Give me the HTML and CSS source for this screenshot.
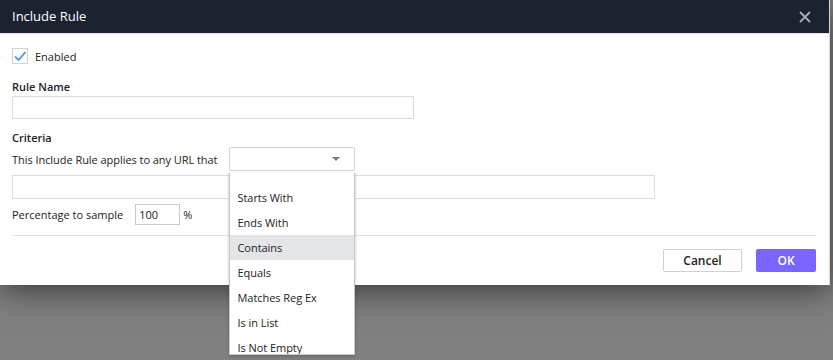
FILE: index.html
```html
<!DOCTYPE html>
<html lang="en">
    <head>
        <meta charset="utf-8" />
        <title>Include Rule</title>
        <link rel="stylesheet" href="styles.css">
    </head>
    <body>
        <div class="dialog">
            <div class="dialog-header">
                <span class="dialog-title">Include Rule</span>
                <svg class="close" width="12" height="12" viewBox="0 0 12 12">
                    <path d="M1 1 L11 11 M11 1 L1 11" stroke="#a9abb0" stroke-width="1.8" fill="none" />
                </svg>
            </div>
            <div class="dialog-body">
                <label class="check-row">
                    <span class="checkbox">
                        <svg width="14" height="14" viewBox="0 0 14 14">
                            <path d="M2 7.5 L5.5 11 L12.5 3" stroke="#3d8fe6" stroke-width="1.6" fill="none" />
                        </svg>
                    </span>
                    Enabled
                </label>

                <h4 class="label">Rule Name</h4>
                <input type="text" class="field name-field" />

                <h4 class="label criteria">Criteria</h4>
                <div class="applies-row">
                    <span>This Include Rule applies to any URL that</span>
                    <div class="select-wrap">
                        <div class="select">
                            <span class="caret"></span>
                        </div>
                        <ul class="options">
                            <li class="blank"></li>
                            <li>Starts With</li>
                            <li>Ends With</li>
                            <li class="hover">Contains</li>
                            <li>Equals</li>
                            <li>Matches Reg Ex</li>
                            <li>Is in List</li>
                            <li>Is Not Empty</li>
                        </ul>
                    </div>
                </div>
                <input type="text" class="field url-field" />

                <div class="sample-row">
                    <span>Percentage to sample</span>
                    <input type="text" class="pct" value="100" />
                    <span>%</span>
                </div>

                <div class="divider"></div>

                <div class="actions">
                    <button class="btn cancel">Cancel</button>
                    <button class="btn ok">OK</button>
                </div>
            </div>
        </div>
    </body>
</html>
```

FILE: styles.css
```css
body{
    margin: 0;
    background-color: #808080;
    font-family: "Open Sans", "Noto Sans", sans-serif;
    font-size: 11px;
    color: #222;
    height: 360px;
    overflow: hidden;
}

.dialog{
    width: 829px;
    background-color: #fff;
    box-shadow: 0 6px 30px rgba(0, 0, 0, 0.55);
    border-right: 1px solid #d8d8d8;
}

.dialog-header{
    height: 34px;
    background-color: #1c2230;
    border-bottom: 1px solid #e6e6ea;
    box-sizing: border-box;
    display: flex;
    align-items: center;
    justify-content: space-between;
    padding: 0 18px 1px 12px;
}

.dialog-title{
    color: #fff;
    font-size: 13px;
}

.close{
    margin-top: 1px;
}

.dialog-body{
    padding: 14px 12px 13px 12px;
}

.check-row{
    display: flex;
    align-items: center;
    gap: 7px;
    height: 16px;
}

.checkbox{
    width: 14px;
    height: 14px;
    border: 1px solid #cfd2d6;
    display: inline-flex;
}

.label{
    margin: 15px 0 1px 0;
    font-size: 11px;
    font-weight: 600;
    line-height: 16px;
}

.label.criteria{
    margin-top: 11px;
}

.field{
    display: block;
    box-sizing: border-box;
    height: 23px;
    border: 1px solid #dcdcdc;
    margin: 0;
    padding: 0 6px;
    font: inherit;
}

.name-field{
    width: 402px;
}

.url-field{
    width: 643px;
    height: 24px;
    margin-top: 4px;
}

.applies-row{
    display: flex;
    align-items: center;
    gap: 12px;
    height: 24px;
    letter-spacing: -0.05px;
}

.select-wrap{
    position: relative;
}

.select{
    width: 126px;
    height: 24px;
    box-sizing: border-box;
    border: 1px solid #d2d2d6;
    border-radius: 2px;
    position: relative;
}

.caret{
    position: absolute;
    right: 14px;
    top: 9px;
    border-left: 4px solid transparent;
    border-right: 4px solid transparent;
    border-top: 4px solid #7a7a7a;
}

.options{
    position: absolute;
    left: 0;
    top: 26px;
    width: 126px;
    height: 182px;
    box-sizing: border-box;
    margin: 0;
    padding: 0;
    list-style-type: none;
    background-color: #fff;
    border: 1px solid #c8c8c8;
    border-top: 0;
    box-shadow: 0 1px 3px rgba(0, 0, 0, 0.25);
    overflow: hidden;
    z-index: 5;
}

.options li{
    height: 25px;
    line-height: 25px;
    padding-left: 7px;
    white-space: nowrap;
}

.options li.blank{
    height: 12px;
}

.options li.hover{
    background-color: #e3e5e8;
}

.sample-row{
    display: flex;
    align-items: center;
    height: 21px;
    margin-top: 5px;
}

.pct{
    width: 45px;
    height: 21px;
    box-sizing: border-box;
    border: 1px solid #c9c9c9;
    margin: 0 3px 0 12px;
    padding: 0 3px;
    font: inherit;
    color: #222;
}

.divider{
    border-top: 1px solid #e2e2e2;
    margin-top: 10px;
    width: 804px;
}

.actions{
    display: flex;
    justify-content: flex-end;
    gap: 14px;
    margin-top: 13px;
    padding-right: 1px;
}

.btn{
    height: 23px;
    font: inherit;
    font-size: 12px;
    font-weight: 600;
    border-radius: 2px;
    cursor: pointer;
}

.cancel{
    width: 79px;
    background-color: #fff;
    border: 1px solid #d0d0d0;
    color: #222;
}

.ok{
    width: 60px;
    background-color: #7a66fe;
    border: 0;
    color: #fff;
}
```
